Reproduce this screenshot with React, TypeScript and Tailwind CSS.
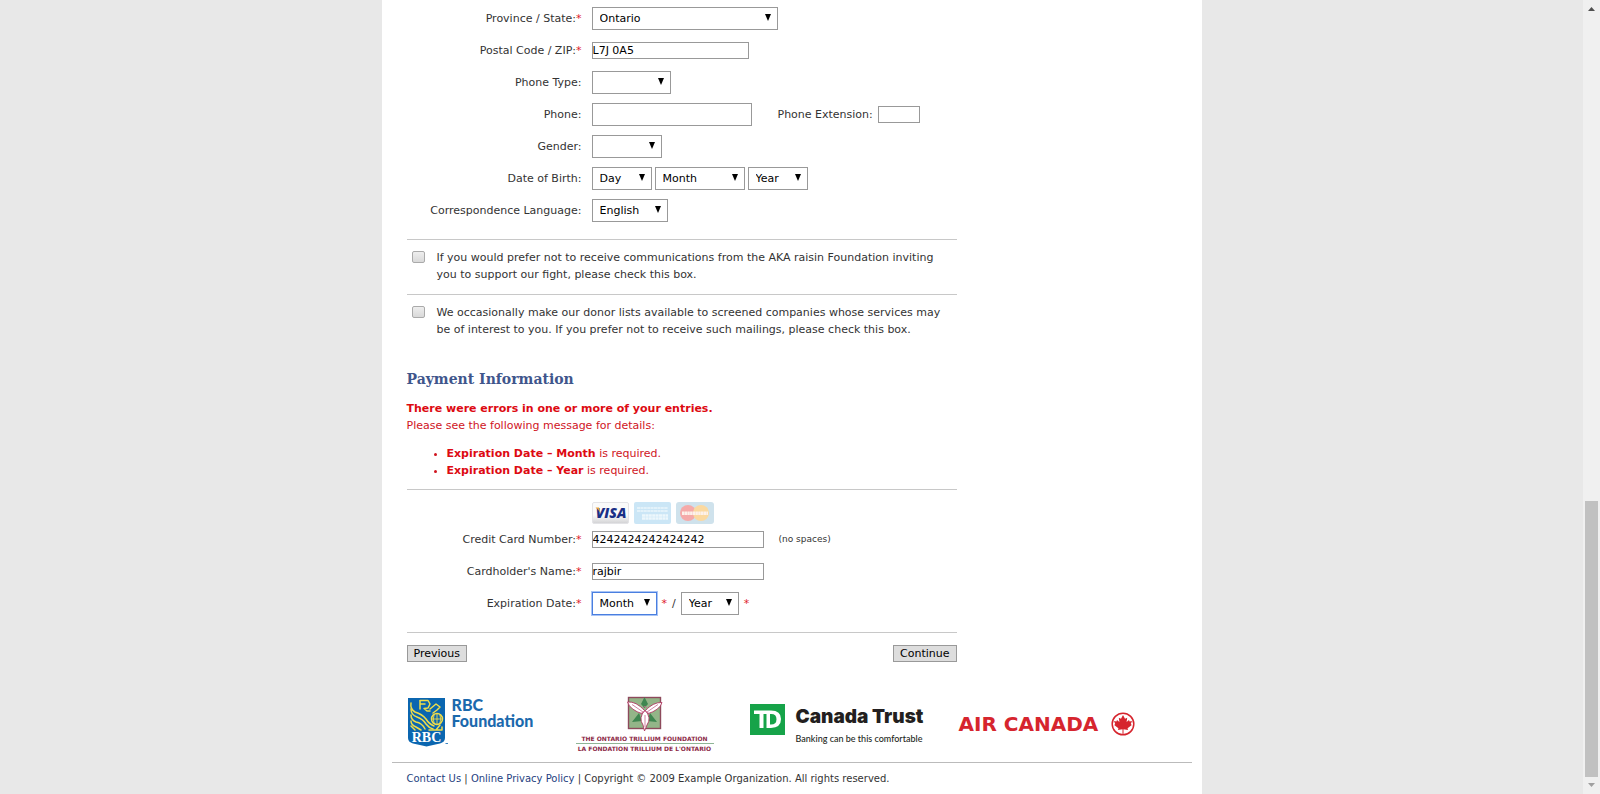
import type { ReactNode } from "react";

const REQUIRED = <span className="text-[#e0202a]">*</span>;

function Row({ label, htmlFor, required, children }: { label: string; htmlFor: string; required?: boolean; children: ReactNode }) {
  return (
    <div className="grid h-[23px] grid-cols-[175px_1fr] items-center gap-x-[10px]">
      <label htmlFor={htmlFor} className="text-right whitespace-nowrap">
        {label}:{required && REQUIRED}
      </label>
      <div className="flex items-center">{children}</div>
    </div>
  );
}

function Select({ id, label, options, width, focused }: { id: string; label?: string; options: string[]; width: string; focused?: boolean }) {
  return (
    <span className={`relative flex shrink-0 ${width}`}>
      <select
        id={id}
        aria-label={label}
        defaultValue={options[0]}
        className={`h-[23px] w-full appearance-none border bg-white pr-4 pl-[7px] text-black outline-none ${
          focused ? "border-[#4a7fe0] ring-1 ring-[#a9c4f5]" : "border-[#999999]"
        }`}
      >
        {options.map((o) => (
          <option key={o}>{o}</option>
        ))}
      </select>
      <svg viewBox="0 0 6 7" className="pointer-events-none absolute top-[7px] right-[7px] h-[7px] w-[6px]">
        <path d="M0 0H6L3 7Z" fill="#000" />
      </svg>
    </span>
  );
}

function TextBox({ id, value, size }: { id: string; value?: string; size: string }) {
  return <input id={id} type="text" defaultValue={value} className={`shrink-0 border border-[#999999] bg-white text-black outline-none ${size}`} />;
}

function Preference({ id, children }: { id: string; children: ReactNode }) {
  return (
    <div className="flex items-start border-t border-[#c8c8c8] pt-[9px] pb-[11px] pl-[5px]">
      <input
        id={id}
        type="checkbox"
        className="mt-[2px] mr-[12px] h-[12px] w-[13px] shrink-0 appearance-none rounded-[2px] border border-[#aaaaaa] bg-linear-to-b from-[#eeeeee] to-[#d9d9d9]"
      />
      <label htmlFor={id} className="w-[510px]">
        {children}
      </label>
    </div>
  );
}

function CardLogos() {
  return (
    <div className="flex gap-[5px] pl-[185px]">
      <svg viewBox="0 0 37 22" className="h-[22px] w-[37px]" role="img" aria-label="Visa">
        <defs>
          <linearGradient id="visaBg" x2="0" y2="1">
            <stop offset="0.6" stopColor="#fafafa" />
            <stop offset="1" stopColor="#d2d2d4" />
          </linearGradient>
        </defs>
        <rect x="0.5" y="0.5" width="36" height="21" rx="1.5" fill="url(#visaBg)" stroke="#e3e3e6" />
        <text x="19" y="16" textAnchor="middle" fontFamily="Open Sans, sans-serif" fontStyle="italic" fontWeight="800" fontSize="14" fill="#1a2f86">
          VISA
        </text>
        <path d="M3.5 5.5H7L8.5 11Q6.5 7.5 3.5 5.5Z" fill="#e8a33a" />
      </svg>
      <svg viewBox="0 0 37 22" className="h-[22px] w-[37px]" role="img" aria-label="American Express">
        <rect width="37" height="22" rx="2" fill="#cbe6f6" />
        <path d="M3 6H34M3 9H34" stroke="#e3f2fa" strokeWidth="2.2" strokeDasharray="3 0.4" />
        <path d="M8 13.5H34M8 16.5H34" stroke="#edf7fc" strokeWidth="2.4" strokeDasharray="3 0.4" />
      </svg>
      <svg viewBox="0 0 38 22" className="h-[22px] w-[38px]" role="img" aria-label="MasterCard">
        <rect width="38" height="22" rx="3" fill="#cfe2ec" />
        <circle cx="12" cy="11" r="8" fill="#f5aaa9" />
        <circle cx="25" cy="11" r="8" fill="#fbd9a0" />
        <path d="M6 11.2H32" stroke="#fdf1ea" strokeWidth="3.4" strokeDasharray="2.4 0.3" />
      </svg>
    </div>
  );
}

function RbcLogo() {
  return (
    <div className="flex items-start pt-[2px]">
      <svg viewBox="0 0 41 50" className="h-[50px] w-[41px] shrink-0" role="img" aria-label="RBC">
        <path d="M1 1H38V41Q38 45 33 46.5Q26 48 19.5 49.5Q13 48 6 46.5Q1 45 1 41Z" fill="#0b66b0" />
        <g fill="none" stroke="#f0dd4a" strokeWidth="1.5" strokeLinecap="round" strokeLinejoin="round">
          <path d="M13 3.5H21L23 7L21 11L17 11.5L20 14H23" />
          <path d="M14 7H18M13 4V12" />
          <path d="M4 6Q3 12 8 15Q15 17 19 22Q22 27 27 29" />
          <path d="M4 12Q4 18 10 20Q16 22 19 27Q22 31 26 32" />
          <path d="M4 18Q4 23 9 25Q15 26 18 32M4 24Q4 28 9 30L14 33M4 29L8 33" />
          <path d="M23 12L29 7L33 10L30 13L26 16" />
          <circle cx="30" cy="22" r="5.5" />
          <path d="M24.5 22H35.5M30 16.5V27.5M27 18Q25.5 22 27 26M33 18Q34.5 22 33 26" strokeWidth="0.9" />
          <path d="M22 33H35V30M29 33L33 28" />
        </g>
        <text x="19.5" y="45" textAnchor="middle" fontFamily="Liberation Serif, serif" fontWeight="700" fontSize="14" fill="#fff">
          RBC
        </text>
        <path d="M38.5 46.5H41" stroke="#0b66b0" strokeWidth="0.8" />
      </svg>
      <div className="pl-1 font-['Lato',sans-serif] text-[16px] leading-[16px] font-black text-[#1b69ad]">
        <p>RBC</p>
        <p>Foundation</p>
      </div>
    </div>
  );
}

function TrilliumLogo() {
  return (
    <div className="flex w-[138px] flex-col items-center">
      <svg viewBox="0 0 36 36" className="mt-px h-[36px] w-[36px]" role="img" aria-label="Trillium">
        <rect x="1.5" y="1.5" width="32" height="31" fill="#93b588" stroke="#8d4a5c" strokeWidth="1.4" />
        <path d="M17.5 1L21 8L17.5 12L14 8ZM5 26L12 17L15 25ZM30 26L23 17L20 25Z" fill="#3f8650" />
        <g fill="#fff" stroke="#b03a62" strokeWidth="0.9">
          <path d="M18 15Q9 5 0.5 6Q3 14 16 18Z" />
          <path d="M18 15Q26 6 35 6.5Q33 14 20 18Z" />
          <path d="M18 14Q11 22 16 29L17.5 35L20 29Q25 22 18 14Z" />
        </g>
        <path d="M16 16L5 8.5M20 16L31 8.5M18 19V31M15 13L18 10L21 13M13 18L18 15L23 18" fill="none" stroke="#c5658a" strokeWidth="0.8" />
      </svg>
      <p className="pt-[3px] text-[6px] leading-[7px] font-bold whitespace-nowrap text-[#8c2846]">THE ONTARIO TRILLIUM FOUNDATION</p>
      <p className="mt-px w-full border-t border-[#8fb596] pt-px text-center text-[6px] leading-[7px] font-bold whitespace-nowrap text-[#8c2846]">
        LA FONDATION TRILLIUM DE L'ONTARIO
      </p>
    </div>
  );
}

function TdLogo() {
  return (
    <div className="flex items-start pt-[9px]">
      <svg viewBox="0 0 35 31" className="h-[31px] w-[35px] shrink-0" role="img" aria-label="TD">
        <rect width="35" height="31" fill="#16a349" />
        <path d="M4 6.5H21Q31 6.5 31 15T21 24H16.5V10H13.5V24H9.5V10H4ZM20 10V20.5Q26.5 21 26.5 15.2T20 10Z" fill="#fff" fillRule="evenodd" />
      </svg>
      <div className="pl-[11px] text-[#231f20]">
        <p className="font-['Inter',sans-serif] text-[19px] leading-[25px] font-black whitespace-nowrap">Canada Trust</p>
        <p className="font-['Lato',sans-serif] text-[9px] leading-[19px] font-medium whitespace-nowrap">Banking can be this comfortable</p>
      </div>
    </div>
  );
}

function AirCanadaLogo() {
  return (
    <div className="flex items-center pt-[2px]">
      <p className="w-[152px] text-[20px] leading-[24px] font-bold whitespace-nowrap text-[#d6252e]">AIR CANADA</p>
      <svg viewBox="0 0 24 24" className="h-6 w-6 shrink-0" role="img" aria-label="Maple leaf">
        <circle cx="12" cy="12" r="10.8" fill="none" stroke="#d6252e" strokeWidth="1.5" />
        <path
          d="M12 3L14 6.8L16.2 5.8L15.6 10L18 8L18.6 9.4L21 9L19.8 12L20.8 13L16.6 16.2L17 18L12.5 17.3V22.5H11.5V17.3L7 18L7.4 16.2L3.2 13L4.2 12L3 9L5.4 9.4L6 8L8.4 10L7.8 5.8L10 6.8Z"
          fill="#d6252e"
        />
      </svg>
    </div>
  );
}

function ScrollBar() {
  return (
    <div aria-hidden="true" className="flex w-[17px] shrink-0 flex-col items-center bg-[#f0f0f0]">
      <svg viewBox="0 0 17 17" className="h-[17px] w-[17px]">
        <path d="M5 11H12L8.5 7Z" fill="#505050" />
      </svg>
      <div className="grow" />
      <div className="h-[276px] w-[13px] bg-[#c1c1c1]" />
      <svg viewBox="0 0 17 17" className="h-[17px] w-[17px]">
        <path d="M5 6H12L8.5 10Z" fill="#a0a0a0" />
      </svg>
    </div>
  );
}

export default function App() {
  return (
    <div className="flex min-h-screen bg-[#e8e8e8] font-['DejaVu_Sans',sans-serif] text-[11px] leading-[17px] text-[#333333]">
      <div className="flex grow justify-center">
        <main className="w-full max-w-[820px] bg-white">
          <form className="ml-[25px] w-[550px] max-w-full" onSubmit={(e) => e.preventDefault()}>
            <div className="flex flex-col gap-[9px] pt-[7px] pb-[17px]">
              <Row label="Province / State" htmlFor="province" required>
                <Select id="province" options={["Ontario"]} width="w-[186px]" />
              </Row>
              <Row label="Postal Code / ZIP" htmlFor="postal" required>
                <TextBox id="postal" value="L7J 0A5" size="h-[17px] w-[157px]" />
              </Row>
              <Row label="Phone Type" htmlFor="phoneType">
                <Select id="phoneType" options={["", "Home"]} width="w-[79px]" />
              </Row>
              <Row label="Phone" htmlFor="phone">
                <TextBox id="phone" size="h-[23px] w-[160px]" />
                <label htmlFor="extension" className="pr-[5px] pl-[26px] whitespace-nowrap">
                  Phone Extension:
                </label>
                <TextBox id="extension" size="h-[17px] w-[42px]" />
              </Row>
              <Row label="Gender" htmlFor="gender">
                <Select id="gender" options={["", "Female", "Male"]} width="w-[70px]" />
              </Row>
              <Row label="Date of Birth" htmlFor="birthDay">
                <div className="flex gap-[3px]">
                  <Select id="birthDay" options={["Day"]} width="w-[60px]" />
                  <Select id="birthMonth" label="Birth month" options={["Month"]} width="w-[90px]" />
                  <Select id="birthYear" label="Birth year" options={["Year"]} width="w-[60px]" />
                </div>
              </Row>
              <Row label="Correspondence Language" htmlFor="language">
                <Select id="language" options={["English"]} width="w-[76px]" />
              </Row>
            </div>

            <Preference id="noCommunications">
              If you would prefer not to receive communications from the AKA raisin Foundation inviting you to support our fight, please check this box.
            </Preference>
            <Preference id="noMailings">
              We occasionally make our donor lists available to screened companies whose services may be of interest to you. If you prefer not to
              receive such mailings, please check this box.
            </Preference>

            <h2 className="pt-5 font-['DejaVu_Serif',serif] text-[14px] leading-[20px] font-bold text-[#3f568c]">Payment Information</h2>
            <div role="alert" className="border-b border-[#c8c8c8] pt-[11px] pb-[10px] text-[#d0141e]">
              <p className="font-bold text-[#dd0a12]">There were errors in one or more of your entries.</p>
              <p>Please see the following message for details:</p>
              <ul className="list-disc pt-[11px] pl-10">
                <li>
                  <strong className="text-[#dd0a12]">Expiration Date – Month</strong> is required.
                </li>
                <li>
                  <strong className="text-[#dd0a12]">Expiration Date – Year</strong> is required.
                </li>
              </ul>
            </div>

            <div className="border-b border-[#c8c8c8] pt-[12px] pb-[17px]">
              <CardLogos />
              <div className="flex flex-col gap-[9px] pt-1">
                <Row label="Credit Card Number" htmlFor="cardNumber" required>
                  <TextBox id="cardNumber" value="4242424242424242" size="h-[17px] w-[172px]" />
                  <span className="pl-[15px] text-[9px]">(no spaces)</span>
                </Row>
                <Row label="Cardholder's Name" htmlFor="cardName" required>
                  <TextBox id="cardName" value="rajbir" size="h-[17px] w-[172px]" />
                </Row>
                <Row label="Expiration Date" htmlFor="expMonth" required>
                  <div className="flex items-center gap-[5px]">
                    <Select id="expMonth" options={["Month"]} width="w-[65px]" focused />
                    {REQUIRED}
                    <span>/</span>
                    <Select id="expYear" label="Expiration year" options={["Year"]} width="w-[58px]" />
                    {REQUIRED}
                  </div>
                </Row>
              </div>
            </div>

            <div className="flex justify-between pt-[12px]">
              <button type="button" className="h-[17px] border border-[#999999] bg-[#dddddd] px-[6px] leading-[15px] text-black">
                Previous
              </button>
              <button type="submit" className="h-[17px] border border-[#999999] bg-[#dddddd] px-[6px] leading-[15px] text-black">
                Continue
              </button>
            </div>
          </form>

          <section aria-label="Sponsors" className="mt-[33px] ml-[25px] grid h-[67px] grid-cols-[169px_174px_209px_auto] items-start">
            <RbcLogo />
            <TrilliumLogo />
            <TdLogo />
            <div className="pt-[15px]">
              <AirCanadaLogo />
            </div>
          </section>

          <footer className="mx-[10px] border-t border-[#bbbbbb] px-[15px] pt-[7px] pb-[6px] text-[10px]">
            <a href="#contact" className="text-[#1f3f7f]">
              Contact Us
            </a>{" "}
            |{" "}
            <a href="#privacy" className="text-[#1f3f7f]">
              Online Privacy Policy
            </a>{" "}
            | Copyright © 2009 Example Organization. All rights reserved.
          </footer>
        </main>
      </div>
      <ScrollBar />
    </div>
  );
}
